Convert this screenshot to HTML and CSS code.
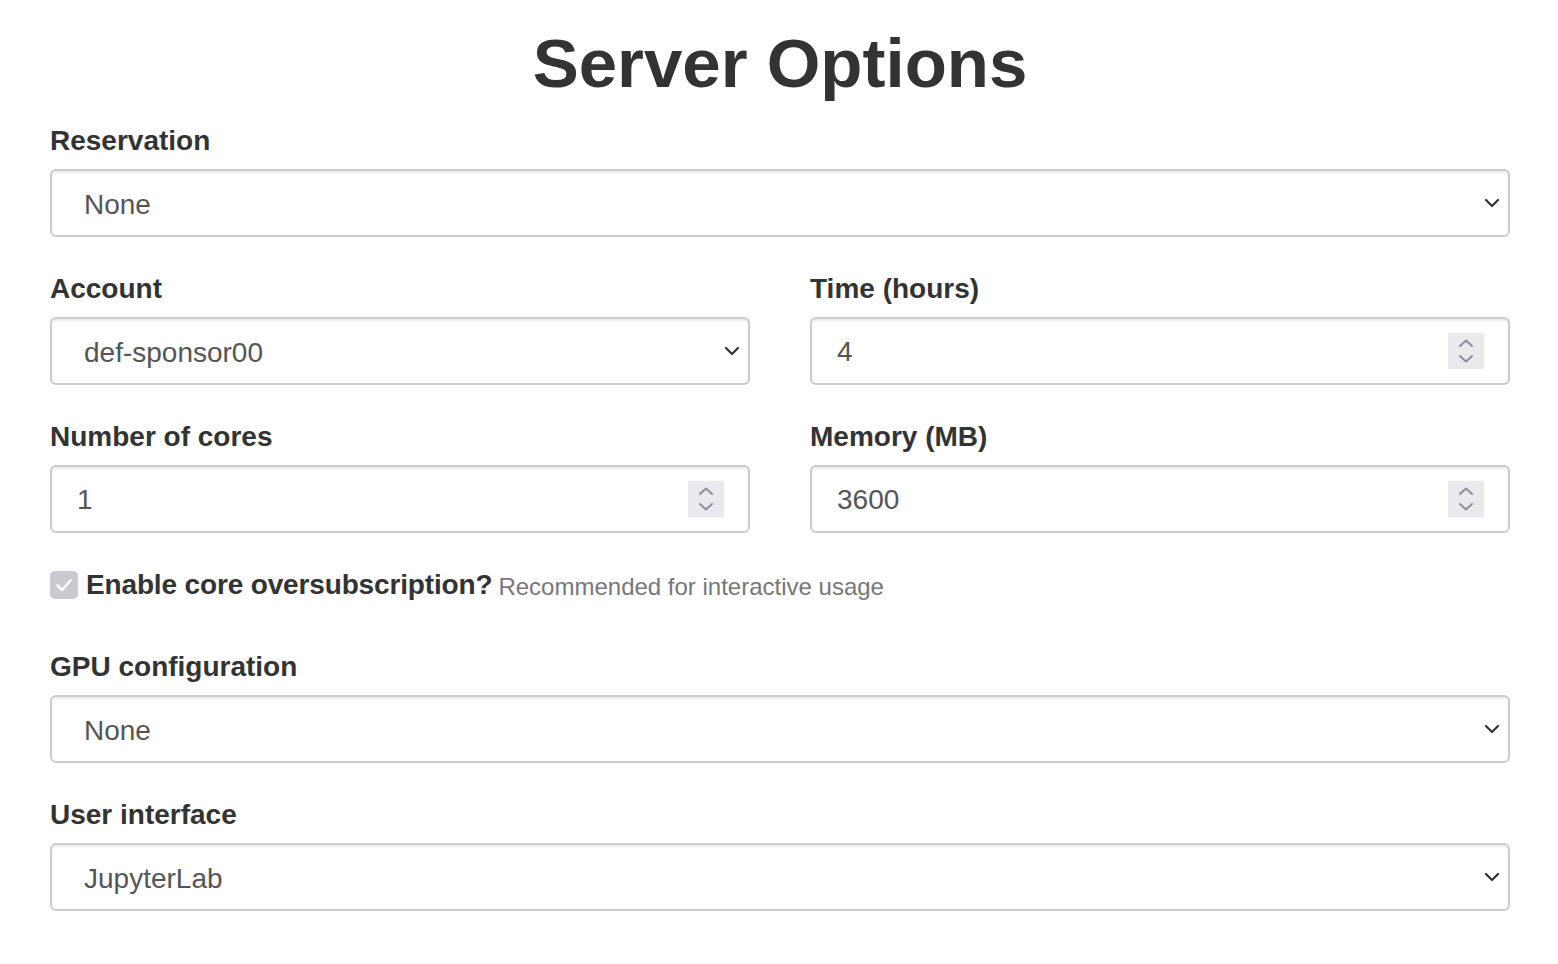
FILE: index.html
```html
<!DOCTYPE html>
<html>
<head>
<meta charset="utf-8">
<title>Server Options</title>
<link rel="stylesheet" href="styles.css">
</head>
<body>
<form class="page">
  <h1 class="title">Server Options</h1>

  <div class="group">
    <label class="label">Reservation</label>
    <div class="select-wrap">
      <select class="control select"><option>None</option></select>
      <svg class="chevron" viewBox="0 0 16 10" width="16" height="10"><path d="M2 2 L8 8 L14 2" fill="none" stroke="#333" stroke-width="2.2" stroke-linecap="round" stroke-linejoin="round"/></svg>
    </div>
  </div>

  <div class="row">
    <div class="group">
      <label class="label">Account</label>
      <div class="select-wrap">
        <select class="control select"><option>def-sponsor00</option></select>
        <svg class="chevron" viewBox="0 0 16 10" width="16" height="10"><path d="M2 2 L8 8 L14 2" fill="none" stroke="#333" stroke-width="2.2" stroke-linecap="round" stroke-linejoin="round"/></svg>
      </div>
    </div>
    <div class="group">
      <label class="label">Time (hours)</label>
      <div class="number-wrap">
        <input class="control number" type="text" value="4">
        <span class="spinner"><svg viewBox="0 0 30 36" width="30" height="36"><path d="M9 13 L15 7.5 L21 13" fill="none" stroke="#8c8c9c" stroke-width="2" stroke-linecap="round" stroke-linejoin="round"/><path d="M9 23 L15 28.5 L21 23" fill="none" stroke="#8c8c9c" stroke-width="2" stroke-linecap="round" stroke-linejoin="round"/></svg></span>
      </div>
    </div>
  </div>

  <div class="row">
    <div class="group">
      <label class="label">Number of cores</label>
      <div class="number-wrap">
        <input class="control number" type="text" value="1">
        <span class="spinner"><svg viewBox="0 0 30 36" width="30" height="36"><path d="M9 13 L15 7.5 L21 13" fill="none" stroke="#8c8c9c" stroke-width="2" stroke-linecap="round" stroke-linejoin="round"/><path d="M9 23 L15 28.5 L21 23" fill="none" stroke="#8c8c9c" stroke-width="2" stroke-linecap="round" stroke-linejoin="round"/></svg></span>
      </div>
    </div>
    <div class="group">
      <label class="label">Memory (MB)</label>
      <div class="number-wrap">
        <input class="control number" type="text" value="3600">
        <span class="spinner"><svg viewBox="0 0 30 36" width="30" height="36"><path d="M9 13 L15 7.5 L21 13" fill="none" stroke="#8c8c9c" stroke-width="2" stroke-linecap="round" stroke-linejoin="round"/><path d="M9 23 L15 28.5 L21 23" fill="none" stroke="#8c8c9c" stroke-width="2" stroke-linecap="round" stroke-linejoin="round"/></svg></span>
      </div>
    </div>
  </div>

  <div class="check-row">
    <span class="checkbox"><svg viewBox="0 0 28 28" width="28" height="28"><path d="M7.5 14.5 L12 19 L20.5 9.5" fill="none" stroke="#fff" stroke-width="2.6" stroke-linecap="round" stroke-linejoin="round"/></svg></span>
    <span class="check-label">Enable core oversubscription?</span>
    <span class="check-help">Recommended for interactive usage</span>
  </div>

  <div class="group">
    <label class="label">GPU configuration</label>
    <div class="select-wrap">
      <select class="control select"><option>None</option></select>
      <svg class="chevron" viewBox="0 0 16 10" width="16" height="10"><path d="M2 2 L8 8 L14 2" fill="none" stroke="#333" stroke-width="2.2" stroke-linecap="round" stroke-linejoin="round"/></svg>
    </div>
  </div>

  <div class="group">
    <label class="label">User interface</label>
    <div class="select-wrap">
      <select class="control select"><option>JupyterLab</option></select>
      <svg class="chevron" viewBox="0 0 16 10" width="16" height="10"><path d="M2 2 L8 8 L14 2" fill="none" stroke="#333" stroke-width="2.2" stroke-linecap="round" stroke-linejoin="round"/></svg>
    </div>
  </div>
</form>
</body>
</html>
```

FILE: styles.css
```css
html, body {
  margin: 0;
  padding: 0;
  background: #fff;
}
body {
  font-family: "Liberation Sans", Arial, Helvetica, sans-serif;
  color: #333;
}
.page {
  padding: 24px 48px 0 50px;
  display: flex;
  flex-direction: column;
}
.title {
  margin: 0 0 16px 0;
  font-size: 69px;
  line-height: 79px;
  font-weight: 700;
  text-align: center;
  color: #333;
}
.group {
  display: flex;
  flex-direction: column;
  margin-bottom: 30px;
  min-width: 0;
}
.row {
  display: grid;
  grid-template-columns: 1fr 1fr;
  column-gap: 60px;
}
.label {
  display: block;
  font-size: 28px;
  line-height: 40px;
  font-weight: 700;
  padding-top: 2px;
  margin-bottom: 8px;
  color: #333;
}
.select-wrap, .number-wrap {
  position: relative;
}
.control {
  display: block;
  box-sizing: border-box;
  width: 100%;
  height: 68px;
  margin: 0;
  border: 2px solid #ccc;
  border-radius: 6px;
  background: #fff;
  box-shadow: inset 0 2px 2px rgba(0,0,0,0.075);
  font-family: "Liberation Sans", Arial, Helvetica, sans-serif;
  font-size: 28px;
  color: #555;
  outline: none;
}
.select {
  -webkit-appearance: none;
  appearance: none;
  padding: 2px 60px 0 32px;
}
.number {
  padding: 2px 80px 0 25px;
}
.chevron {
  position: absolute;
  right: 10px;
  top: 29px;
}
.spinner {
  position: absolute;
  right: 26px;
  top: 16px;
  width: 36px;
  height: 36px;
  background: #e9e9ee;
  display: flex;
  align-items: center;
  justify-content: center;
}
.check-row {
  display: flex;
  align-items: center;
  height: 40px;
  margin: 2px 0 40px 0;
}
.checkbox {
  width: 28px;
  height: 28px;
  border-radius: 5px;
  background: #c9c9d1;
  display: flex;
  margin-right: 8px;
}
.check-label {
  font-size: 28px;
  font-weight: 700;
  color: #333;
  margin-right: 6px;
  letter-spacing: -0.15px;
}
.check-help {
  font-size: 24px;
  color: #777;
  padding-top: 3px;
}
```
